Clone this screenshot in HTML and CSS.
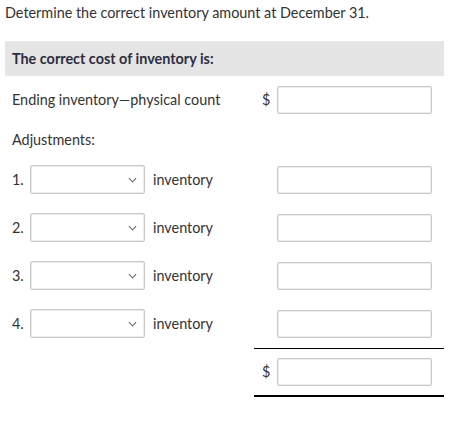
FILE: index.html
```html
<!DOCTYPE html>
<html>
<head>
<meta charset="utf-8">
<link rel="stylesheet" href="styles.css">
</head>
<body>
<p class="prompt">Determine the correct inventory amount at December 31.</p>
<div class="band">The correct cost of inventory is:</div>
<div class="grid">
  <div class="label-wide">Ending inventory—physical count</div>
  <div class="dollar">$</div>
  <div class="cell"><input class="amount" type="text"></div>
  <div class="spacer"></div>

  <div class="adj">Adjustments:</div>

  <div class="num">1.</div>
  <div class="cell"><div class="select"><svg class="chev" viewBox="0 0 10 6" width="9" height="6"><path d="M1 1l4 4 4-4" fill="none" stroke="#777" stroke-width="1.3"/></svg></div></div>
  <div class="word">inventory</div>
  <div></div>
  <div class="cell"><input class="amount" type="text"></div>
  <div></div>

  <div class="num">2.</div>
  <div class="cell"><div class="select"><svg class="chev" viewBox="0 0 10 6" width="9" height="6"><path d="M1 1l4 4 4-4" fill="none" stroke="#777" stroke-width="1.3"/></svg></div></div>
  <div class="word">inventory</div>
  <div></div>
  <div class="cell"><input class="amount" type="text"></div>
  <div></div>

  <div class="num">3.</div>
  <div class="cell"><div class="select"><svg class="chev" viewBox="0 0 10 6" width="9" height="6"><path d="M1 1l4 4 4-4" fill="none" stroke="#777" stroke-width="1.3"/></svg></div></div>
  <div class="word">inventory</div>
  <div></div>
  <div class="cell"><input class="amount" type="text"></div>
  <div></div>

  <div class="num">4.</div>
  <div class="cell"><div class="select"><svg class="chev" viewBox="0 0 10 6" width="9" height="6"><path d="M1 1l4 4 4-4" fill="none" stroke="#777" stroke-width="1.3"/></svg></div></div>
  <div class="word">inventory</div>
  <div></div>
  <div class="cell"><input class="amount" type="text"></div>
  <div></div>

  <div class="total">
    <div class="dollar">$</div>
    <div class="cell"><input class="amount" type="text"></div>
  </div>
</div>
</body>
</html>
```
FILE: styles.css
```css
html, body {
  margin: 0;
  padding: 0;
  background: #fff;
}
body {
  font-family: Lato, "Liberation Sans", sans-serif;
  font-size: 14.4px;
  color: #333;
  padding: 0 11px 0 5px;
  width: 439px;
}
.prompt {
  margin: 0;
  padding-top: 4px;
  line-height: 17px;
  height: 37px;
}
.band {
  background: #e5e5e5;
  height: 35px;
  line-height: 35px;
  padding-left: 7px;
  font-weight: bold;
  color: #2d2d40;
}
.grid {
  display: grid;
  grid-template-columns: 18px 115px 109px 23px 155px 12px;
  padding-left: 7px;
  margin-top: 10px;
  align-items: center;
}
.label-wide {
  grid-column: 1 / 4;
  height: 28px;
  line-height: 28px;
}
.dollar {
  padding-left: 8px;
  line-height: 28px;
}
.cell {
  display: flex;
}
.amount {
  box-sizing: border-box;
  width: 155px;
  height: 28px;
  margin: 0;
  border: 1px solid #c8c8c8;
  border-radius: 2px;
  background: #fff;
  box-shadow: inset 0 0 0 1px #ececec;
  padding: 0;
}
.num {
  line-height: 29px;
}
.select {
  box-sizing: border-box;
  width: 115px;
  height: 29px;
  border: 1px solid #c8c8c8;
  border-radius: 2px;
  box-shadow: inset 0 0 0 1px #ececec;
  display: flex;
  align-items: center;
  justify-content: flex-end;
  padding-right: 7px;
}
.chev {
  display: block;
}
.word {
  padding-left: 8px;
  line-height: 29px;
}
.grid > div:nth-child(n+6) {
  margin-bottom: 19px;
}
.grid > .adj {
  grid-column: 1 / -1;
  margin-top: 17px;
  margin-bottom: 17px;
  line-height: 17px;
}
.grid > .total {
  grid-column: 4 / 7;
  display: grid;
  grid-template-columns: 23px 155px 12px;
  border-top: 1px solid #000;
  border-bottom: 2px solid #000;
  padding: 9px 0 9px 0;
  margin-top: -9px;
  margin-bottom: 0;
}
```
